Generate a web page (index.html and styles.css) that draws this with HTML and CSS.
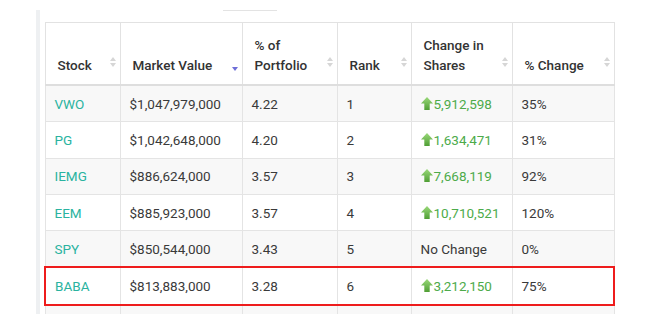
FILE: index.html
```html
<!DOCTYPE html>
<html lang="en">
<head>
    <meta charset="UTF-8">
    <title>Holdings</title>
    <link rel="stylesheet" href="styles.css">
</head>
<body>
    <div class="panel">
        <div class="tabs"><span class="tab-line"></span></div>

        <table class="holdings">
            <colgroup>
                <col style="width: 75px">
                <col style="width: 122px">
                <col style="width: 95px">
                <col style="width: 74px">
                <col style="width: 101px">
                <col style="width: 102px">
            </colgroup>
            <thead>
                <tr>
                    <th>Stock <span class="sort"></span></th>
                    <th>Market Value <span class="sort desc"></span></th>
                    <th>% of<br>Portfolio <span class="sort"></span></th>
                    <th>Rank <span class="sort"></span></th>
                    <th>Change in<br>Shares <span class="sort"></span></th>
                    <th>% Change <span class="sort"></span></th>
                </tr>
            </thead>
            <tbody>
                <tr>
                    <td class="ticker">VWO</td>
                    <td>$1,047,979,000</td>
                    <td>4.22</td>
                    <td>1</td>
                    <td class="up"><svg width="12" height="13" viewBox="0 0 12 13"><path d="M6 0 L12 6.5 L8.7 6.5 L8.7 13 L3.3 13 L3.3 6.5 L0 6.5 Z" fill="url(#g)"/></svg>5,912,598</td>
                    <td>35%</td>
                </tr>
                <tr>
                    <td class="ticker">PG</td>
                    <td>$1,042,648,000</td>
                    <td>4.20</td>
                    <td>2</td>
                    <td class="up"><svg width="12" height="13" viewBox="0 0 12 13"><path d="M6 0 L12 6.5 L8.7 6.5 L8.7 13 L3.3 13 L3.3 6.5 L0 6.5 Z" fill="url(#g)"/></svg>1,634,471</td>
                    <td>31%</td>
                </tr>
                <tr>
                    <td class="ticker">IEMG</td>
                    <td>$886,624,000</td>
                    <td>3.57</td>
                    <td>3</td>
                    <td class="up"><svg width="12" height="13" viewBox="0 0 12 13"><path d="M6 0 L12 6.5 L8.7 6.5 L8.7 13 L3.3 13 L3.3 6.5 L0 6.5 Z" fill="url(#g)"/></svg>7,668,119</td>
                    <td>92%</td>
                </tr>
                <tr>
                    <td class="ticker">EEM</td>
                    <td>$885,923,000</td>
                    <td>3.57</td>
                    <td>4</td>
                    <td class="up"><svg width="12" height="13" viewBox="0 0 12 13"><path d="M6 0 L12 6.5 L8.7 6.5 L8.7 13 L3.3 13 L3.3 6.5 L0 6.5 Z" fill="url(#g)"/></svg>10,710,521</td>
                    <td>120%</td>
                </tr>
                <tr>
                    <td class="ticker">SPY</td>
                    <td>$850,544,000</td>
                    <td>3.43</td>
                    <td>5</td>
                    <td>No Change</td>
                    <td>0%</td>
                </tr>
                <tr class="highlight">
                    <td class="ticker">BABA</td>
                    <td>$813,883,000</td>
                    <td>3.28</td>
                    <td>6</td>
                    <td class="up"><svg width="12" height="13" viewBox="0 0 12 13"><path d="M6 0 L12 6.5 L8.7 6.5 L8.7 13 L3.3 13 L3.3 6.5 L0 6.5 Z" fill="url(#g)"/></svg>3,212,150</td>
                    <td>75%</td>
                </tr>
                <tr>
                    <td class="ticker"></td>
                    <td></td>
                    <td></td>
                    <td></td>
                    <td class="up"><svg width="12" height="13" viewBox="0 0 12 13"><path d="M6 0 L12 6.5 L8.7 6.5 L8.7 13 L3.3 13 L3.3 6.5 L0 6.5 Z" fill="url(#g)"/></svg></td>
                    <td></td>
                </tr>
            </tbody>
        </table>
    </div>

    <svg width="0" height="0" class="defs">
        <defs>
            <linearGradient id="g" x1="0" y1="0" x2="0" y2="1">
                <stop offset="0" stop-color="#9ad97a"/>
                <stop offset="1" stop-color="#4f9e34"/>
            </linearGradient>
        </defs>
    </svg>
</body>
</html>
```

FILE: styles.css
```css
body {
    margin: 0;
    background: #fff;
    font-family: Roboto, "Liberation Sans", sans-serif;
    font-size: 13.5px;
    color: #3a3a3a;
}

.panel {
    margin: 10px 0 0 36px;
    padding-left: 4px;
    border-left: 4px solid #eef0f2;
    width: 575px;
}

.tabs {
    height: 12px;
}

.tab-line {
    display: block;
    margin-left: 179px;
    width: 54px;
    border-top: 1px solid #e3e3e3;
}

.holdings {
    border-collapse: collapse;
    table-layout: fixed;
    width: 569px;
    border: 1px solid #e2e2e2;
}

.holdings th {
    position: relative;
    height: 52px;
    padding: 0 22px 9px 12px;
    text-align: left;
    vertical-align: bottom;
    font-weight: 500;
    line-height: 20px;
    color: #333;
    border: 1px solid #e2e2e2;
    border-bottom: 2px solid #dedede;
}

.sort {
    position: absolute;
    right: 7px;
    bottom: 17px;
    width: 0;
    height: 10px;
}

.sort::before,
.sort::after {
    content: "";
    position: absolute;
    left: -3px;
    border-left: 3.5px solid transparent;
    border-right: 3.5px solid transparent;
}

.sort::before {
    top: 0;
    border-bottom: 4px solid #d6d6d6;
}

.sort::after {
    bottom: 0;
    border-top: 4px solid #d6d6d6;
}

.sort.desc::before {
    display: none;
}

.sort.desc::after {
    bottom: -4px;
    border-top-color: #6e6ed8;
}

.holdings td {
    height: 35.3px;
    padding: 0 8px 0 9px;
    border: 1px solid #e4e4e4;
    white-space: nowrap;
}

.holdings tbody tr:nth-child(odd) {
    background: #f8f8f8;
}

.ticker {
    color: #2ab3a0;
}

.up {
    color: #4dab4a;
}

.up svg {
    margin: 0 1px -1px 0;
}

.holdings tr.highlight td {
    border-top: 2px solid #ee1c1c;
    border-bottom: 2px solid #ee1c1c;
}

.holdings tr.highlight td:first-child {
    border-left: 2px solid #ee1c1c;
}

.holdings tr.highlight td:last-child {
    border-right: 2px solid #ee1c1c;
}

.defs {
    position: absolute;
}
```
